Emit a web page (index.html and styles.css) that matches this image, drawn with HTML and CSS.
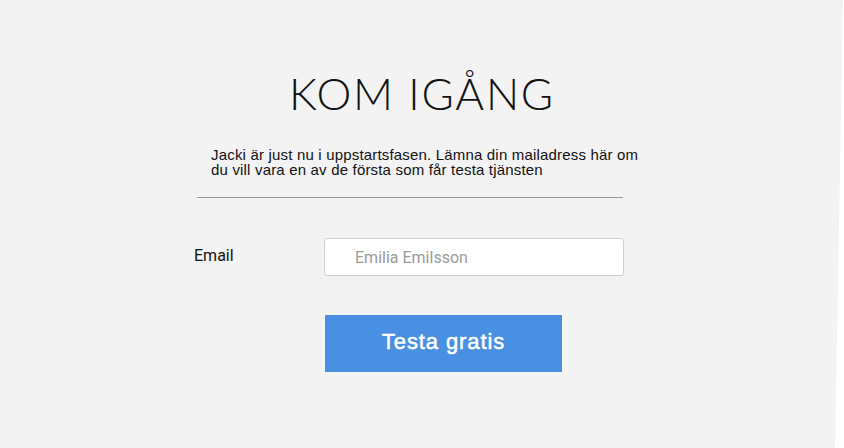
FILE: index.html
```html
<!DOCTYPE html>
<html lang="sv">
<head>
<meta charset="utf-8">
<title>Kom igång</title>
<link rel="stylesheet" href="styles.css">
</head>
<body>
<main class="panel">
  <h1 class="title">KOM IGÅNG</h1>
  <p class="intro">Jacki är just nu i uppstartsfasen. Lämna din mailadress här om du vill vara en av de första som får testa tjänsten</p>
  <hr class="divider">
  <form class="form">
    <div class="row">
      <label class="label" for="email">Email</label>
      <input class="input" id="email" type="email" placeholder="Emilia Emilsson">
    </div>
    <button class="button" type="button">Testa gratis</button>
  </form>
</main>
</body>
</html>
```
FILE: styles.css
```css
html, body {
  margin: 0;
  padding: 0;
  background: #ffffff;
}
.panel {
  width: 844px;
  height: 448px;
  background: #f3f3f3;
  clip-path: polygon(0 0, 843px 0, 835px 448px, 0 448px);
  padding-top: 67px;
  box-sizing: border-box;
}
.title {
  margin: 0 0 0 289px;
  font-family: "Lato", sans-serif;
  font-weight: 300;
  font-size: 44px;
  line-height: 52px;
  letter-spacing: 1.7px;
  color: #111;
}
.intro {
  margin: 28px 0 0 211px;
  width: 432px;
  font-family: "Liberation Sans", Arial, sans-serif;
  font-size: 15px;
  line-height: 15px;
  letter-spacing: 0.18px;
  color: #111;
}
.divider {
  margin: 20px 0 0 197px;
  width: 426px;
  border: 0;
  border-top: 1px solid #999;
  height: 0;
}
.form {
  margin: 40px 0 0 0;
}
.row {
  display: flex;
  align-items: center;
  margin-left: 194px;
}
.label {
  width: 130px;
  font-family: "Roboto", sans-serif;
  font-size: 16px;
  line-height: 18px;
  padding-bottom: 2px;
  color: #111;
}
.input {
  box-sizing: border-box;
  width: 300px;
  height: 38px;
  border: 1px solid #cfcfcf;
  border-radius: 3px;
  background: #fff;
  padding: 0 0 0 30px;
  font-family: "Roboto", sans-serif;
  font-size: 16px;
  color: #333;
  outline: none;
}
.input::placeholder {
  color: #9a9a9a;
}
.button {
  display: block;
  margin: 39px 0 0 325px;
  width: 237px;
  height: 57px;
  border: 0;
  background: #4a90e2;
  color: #fff;
  font-family: "Liberation Sans", Arial, sans-serif;
  font-weight: 400;
  font-size: 22px;
  letter-spacing: 0.9px;
  -webkit-text-stroke: 0.5px #fff;
  padding: 0 0 3px 0;
}
```
